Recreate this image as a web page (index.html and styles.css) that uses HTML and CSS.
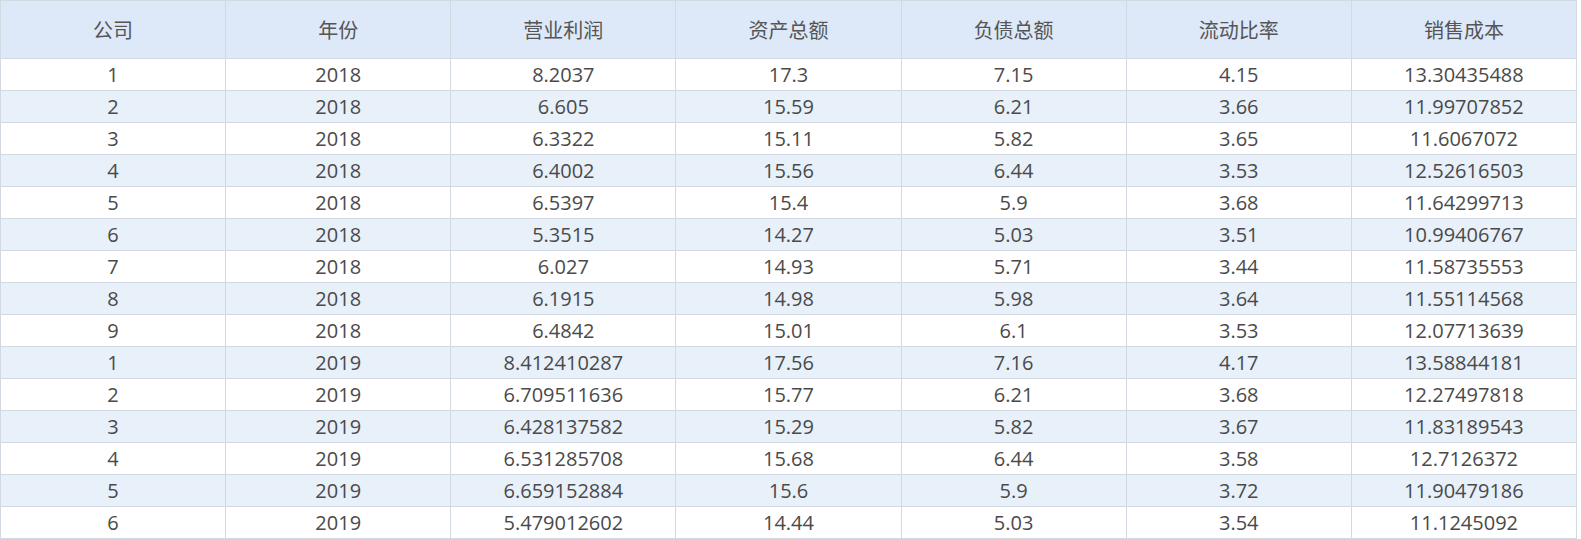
FILE: index.html
```html
<!DOCTYPE html>
<html>
<head>
<meta charset="utf-8">
<link rel="stylesheet" href="styles.css">
</head>
<body>
<table class="grid">
<thead>
<tr><th>公司</th><th>年份</th><th>营业利润</th><th>资产总额</th><th>负债总额</th><th>流动比率</th><th>销售成本</th></tr>
</thead>
<tbody>
<tr><td>1</td><td>2018</td><td>8.2037</td><td>17.3</td><td>7.15</td><td>4.15</td><td>13.30435488</td></tr>
<tr><td>2</td><td>2018</td><td>6.605</td><td>15.59</td><td>6.21</td><td>3.66</td><td>11.99707852</td></tr>
<tr><td>3</td><td>2018</td><td>6.3322</td><td>15.11</td><td>5.82</td><td>3.65</td><td>11.6067072</td></tr>
<tr><td>4</td><td>2018</td><td>6.4002</td><td>15.56</td><td>6.44</td><td>3.53</td><td>12.52616503</td></tr>
<tr><td>5</td><td>2018</td><td>6.5397</td><td>15.4</td><td>5.9</td><td>3.68</td><td>11.64299713</td></tr>
<tr><td>6</td><td>2018</td><td>5.3515</td><td>14.27</td><td>5.03</td><td>3.51</td><td>10.99406767</td></tr>
<tr><td>7</td><td>2018</td><td>6.027</td><td>14.93</td><td>5.71</td><td>3.44</td><td>11.58735553</td></tr>
<tr><td>8</td><td>2018</td><td>6.1915</td><td>14.98</td><td>5.98</td><td>3.64</td><td>11.55114568</td></tr>
<tr><td>9</td><td>2018</td><td>6.4842</td><td>15.01</td><td>6.1</td><td>3.53</td><td>12.07713639</td></tr>
<tr><td>1</td><td>2019</td><td>8.412410287</td><td>17.56</td><td>7.16</td><td>4.17</td><td>13.58844181</td></tr>
<tr><td>2</td><td>2019</td><td>6.709511636</td><td>15.77</td><td>6.21</td><td>3.68</td><td>12.27497818</td></tr>
<tr><td>3</td><td>2019</td><td>6.428137582</td><td>15.29</td><td>5.82</td><td>3.67</td><td>11.83189543</td></tr>
<tr><td>4</td><td>2019</td><td>6.531285708</td><td>15.68</td><td>6.44</td><td>3.58</td><td>12.7126372</td></tr>
<tr><td>5</td><td>2019</td><td>6.659152884</td><td>15.6</td><td>5.9</td><td>3.72</td><td>11.90479186</td></tr>
<tr><td>6</td><td>2019</td><td>5.479012602</td><td>14.44</td><td>5.03</td><td>3.54</td><td>11.1245092</td></tr>
</tbody>
</table>
</body>
</html>
```

FILE: styles.css
```css
html, body {
  margin: 0;
  padding: 0;
  background: #ffffff;
}
.grid {
  width: 1577px;
  table-layout: fixed;
  border-collapse: collapse;
  font-family: "Open Sans", "Noto Sans CJK SC", sans-serif;
  font-size: 20px;
  color: #4a4a4a;
}
.grid th, .grid td {
  border: 1px solid #d2d9e2;
  text-align: center;
  padding: 0;
  white-space: nowrap;
}
.grid th {
  height: 57px;
  background: #dde9f8;
  font-weight: normal;
  font-family: "Noto Sans CJK SC", sans-serif;
  color: #555555;
}
.grid td {
  height: 31px;
  line-height: 31px;
}
.grid tbody tr:nth-child(even) td {
  background: #e8f0fa;
}
```
